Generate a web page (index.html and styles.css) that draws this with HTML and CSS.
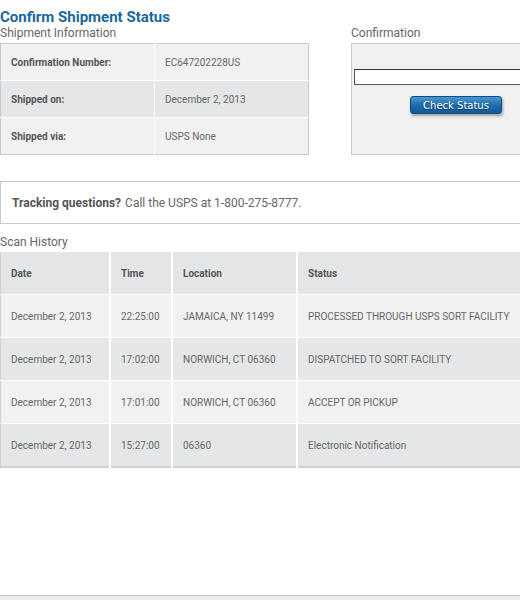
FILE: index.html
```html
<!DOCTYPE html>
<html lang="en">
<head>
    <meta charset="UTF-8">
    <title>Confirm Shipment Status</title>
    <link rel="stylesheet" href="styles.css">
</head>
<body>
    <div class="page">
        <h1>Confirm Shipment Status</h1>
        <div class="top">
            <div class="info">
                <h2>Shipment Information</h2>
                <table class="ship">
                    <tr>
                        <th>Confirmation Number:</th>
                        <td>EC647202228US</td>
                    </tr>
                    <tr class="alt">
                        <th>Shipped on:</th>
                        <td>December 2, 2013</td>
                    </tr>
                    <tr>
                        <th>Shipped via:</th>
                        <td>USPS None</td>
                    </tr>
                </table>
            </div>
            <div class="confirm">
                <h2>Confirmation</h2>
                <div class="confirm-box">
                    <input type="text" class="confirm-input">
                    <button class="check">Check Status</button>
                </div>
            </div>
        </div>

        <div class="tracking">
            <b>Tracking questions?</b> Call the USPS at 1-800-275-8777.
        </div>

        <h2>Scan History</h2>
        <table class="scan">
            <tr class="head">
                <th class="c-date">Date</th>
                <th class="c-time">Time</th>
                <th class="c-loc">Location</th>
                <th>Status</th>
            </tr>
            <tr>
                <td>December 2, 2013</td>
                <td>22:25:00</td>
                <td>JAMAICA, NY 11499</td>
                <td>PROCESSED THROUGH USPS SORT FACILITY</td>
            </tr>
            <tr class="alt">
                <td>December 2, 2013</td>
                <td>17:02:00</td>
                <td>NORWICH, CT 06360</td>
                <td>DISPATCHED TO SORT FACILITY</td>
            </tr>
            <tr>
                <td>December 2, 2013</td>
                <td>17:01:00</td>
                <td>NORWICH, CT 06360</td>
                <td>ACCEPT OR PICKUP</td>
            </tr>
            <tr class="alt">
                <td>December 2, 2013</td>
                <td>15:27:00</td>
                <td>06360</td>
                <td>Electronic Notification</td>
            </tr>
        </table>

        <div class="bottom-bar"></div>
    </div>
</body>
</html>
```

FILE: styles.css
```css
body {
    font-family: Roboto, 'Noto Sans', sans-serif;
    margin: 0;
    padding: 0;
    background-color: #fff;
    overflow: hidden;
}
.page {
    width: 560px;
    height: 600px;
    display: flex;
    flex-direction: column;
}
h1 {
    color: #1b679c;
    font-size: 15px;
    font-weight: 700;
    margin: 8px 0 0;
    line-height: 18px;
}
h2 {
    color: #666;
    font-size: 12px;
    font-weight: 400;
    margin: 0;
    line-height: 15px;
}
.top {
    display: flex;
    gap: 42px;
}
.info {
    width: 309px;
}
.confirm {
    flex: 1;
}
.ship {
    width: 309px;
    border-collapse: collapse;
    border: 1px solid #c8c8c8;
    margin-top: 2px;
    background-color: #f1f1f1;
}
.ship th, .ship td {
    height: 36px;
    padding: 0 0 0 10px;
    font-size: 10px;
    text-align: left;
    border: 1px solid #fff;
    color: #666;
}
.ship th {
    width: 143px;
    color: #555;
    font-weight: 700;
}
.ship tr:first-child th, .ship tr:first-child td {
    border-top: none;
}
.ship tr:last-child th, .ship tr:last-child td {
    border-bottom: none;
}
.ship th {
    border-left: none;
}
.ship td {
    border-right: none;
}
.alt {
    background-color: #e5e6e7;
}
.confirm-box {
    margin-top: 2px;
    height: 112px;
    border: 1px solid #c8c8c8;
    background-color: #f1f1f1;
    padding: 25px 0 0 2px;
    box-sizing: border-box;
}
.confirm-input {
    display: block;
    width: 100%;
    height: 16px;
    box-sizing: border-box;
    border: 1px solid #555;
    border-top-color: #333;
    background-color: #fff;
    margin: 0;
}
.check {
    display: block;
    margin: 11px 0 0 56px;
    width: 92px;
    height: 18px;
    padding: 0;
    border: 1px solid #0b4f84;
    border-radius: 3px;
    background: linear-gradient(#4c97cf, #1e6eaf 50%, #0c5a99);
    box-shadow: 1px 2px 3px rgba(0, 0, 0, 0.35);
    color: #fff;
    font-family: 'DejaVu Sans', sans-serif;
    font-size: 10px;
    text-shadow: 0 1px 1px rgba(0, 0, 0, 0.5);
}
.tracking {
    margin-top: 26px;
    height: 43px;
    box-sizing: border-box;
    border: 1px solid #c8c8c8;
    padding: 0 11px;
    display: flex;
    align-items: center;
    gap: 4px;
    font-size: 12px;
    color: #666;
}
.tracking b {
    color: #555;
}
.tracking + h2 {
    margin-top: 11px;
}
.scan {
    margin-top: 2px;
    width: 100%;
    border-collapse: collapse;
    border-left: 1px solid #d0d0d0;
    border-bottom: 2px solid #d0d0d0;
    background-color: #f1f1f1;
}
.scan th, .scan td {
    height: 42px;
    padding: 0 0 0 10px;
    font-size: 10px;
    text-align: left;
    color: #666;
    border-left: 2px solid #fff;
    border-top: 1px solid #fff;
    white-space: nowrap;
}
.scan th:first-child, .scan td:first-child {
    border-left: none;
}
.scan th {
    color: #555;
    font-weight: 700;
}
.scan .head {
    background-color: #e4e5e6;
}
.scan .head th {
    border-top: none;
}
.c-date {
    width: 98px;
}
.c-time {
    width: 50px;
}
.c-loc {
    width: 113px;
}
.bottom-bar {
    margin-top: auto;
    height: 4px;
    border-top: 1px solid #bdbdbd;
    background-color: #ececec;
}
```
